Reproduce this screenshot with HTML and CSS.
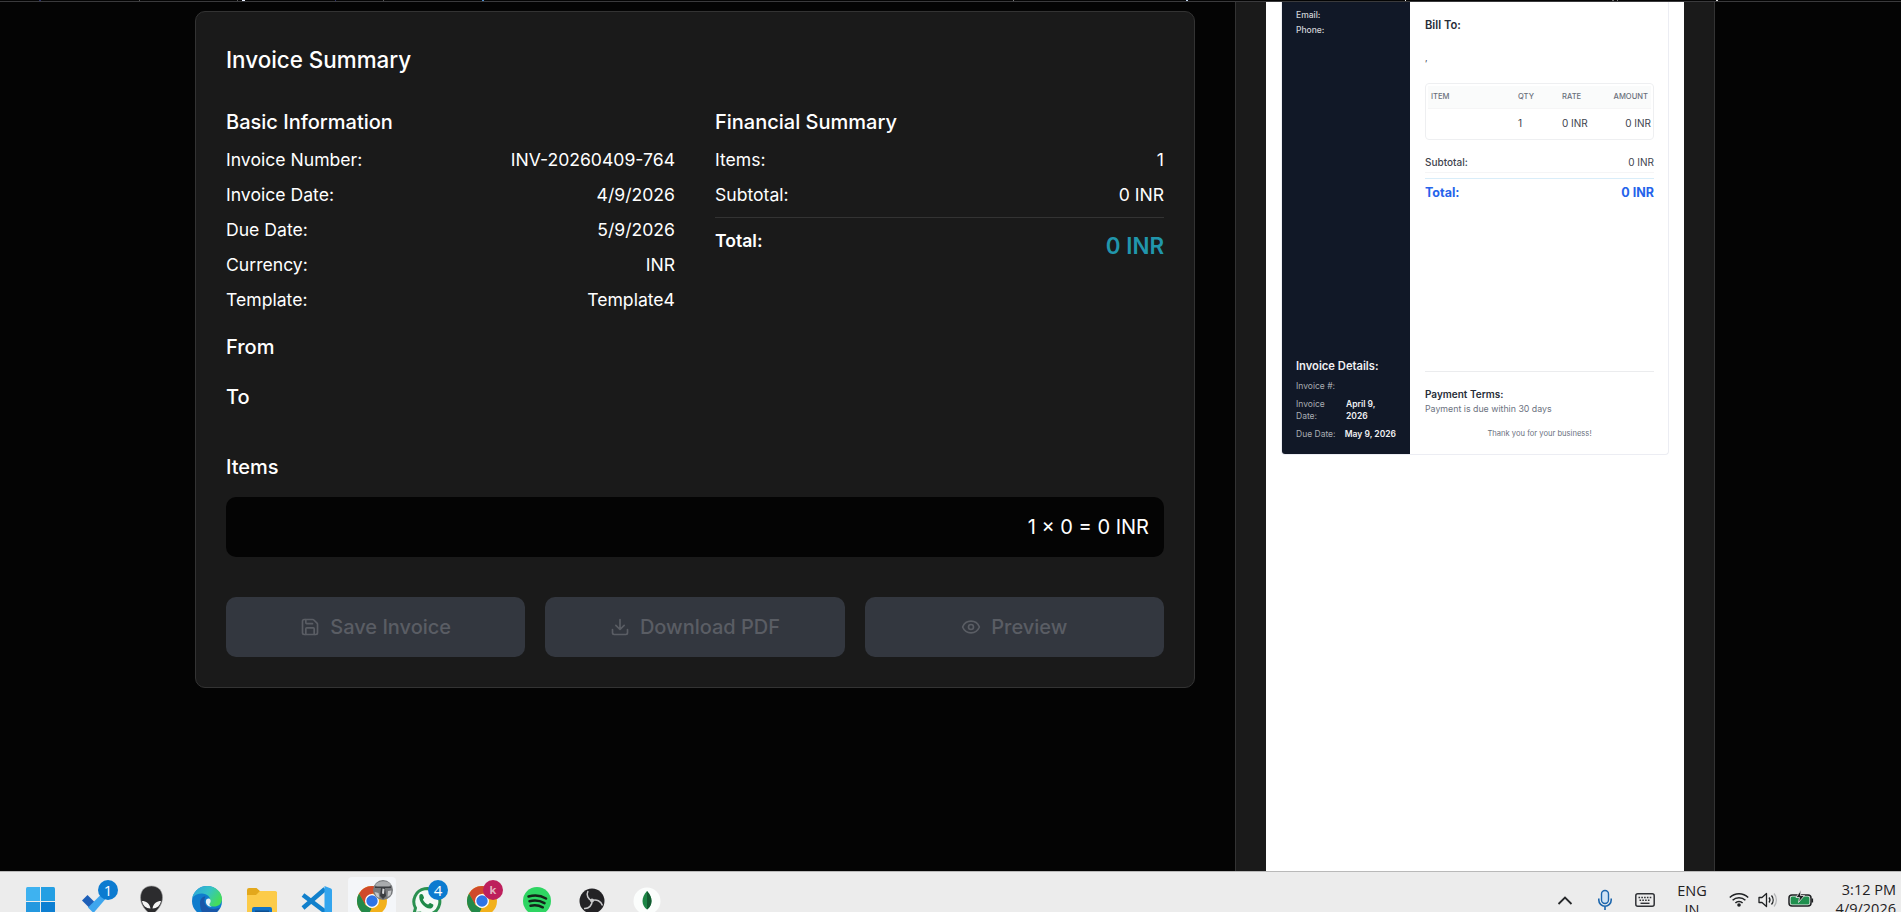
FILE: index.html
```
<!DOCTYPE html>
<html lang="en">
<head>
    <meta charset="UTF-8">
    <meta name="viewport" content="width=device-width, initial-scale=1.0">
    <title>Invoice Generator</title>
    <link rel="stylesheet" href="styles.css">
</head>
<body>
    <div class="top-strip"></div>

    <main class="page">
        <section class="summary">
            <h2>Invoice Summary</h2>

            <div class="summary-columns">
                <div class="summary-col">
                    <h3>Basic Information</h3>
                    <div class="row"><span>Invoice Number:</span><span>INV-20260409-764</span></div>
                    <div class="row"><span>Invoice Date:</span><span>4/9/2026</span></div>
                    <div class="row"><span>Due Date:</span><span>5/9/2026</span></div>
                    <div class="row"><span>Currency:</span><span>INR</span></div>
                    <div class="row"><span>Template:</span><span>Template4</span></div>
                </div>
                <div class="summary-col">
                    <h3>Financial Summary</h3>
                    <div class="row"><span>Items:</span><span>1</span></div>
                    <div class="row"><span>Subtotal:</span><span>0 INR</span></div>
                    <div class="row total"><span>Total:</span><span class="total-amount">0 INR</span></div>
                </div>
            </div>

            <h3 class="party">From</h3>
            <h3 class="party">To</h3>

            <h3 class="items-title">Items</h3>
            <div class="item-row">1 × 0 = 0 INR</div>

            <div class="actions">
                <button class="btn" disabled>
                    <svg width="20" height="20" viewBox="0 0 24 24"><path d="M15.2 3a2 2 0 0 1 1.4.6l3.8 3.8a2 2 0 0 1 .6 1.4V19a2 2 0 0 1-2 2H5a2 2 0 0 1-2-2V5a2 2 0 0 1 2-2z"/><path d="M17 21v-7a1 1 0 0 0-1-1H8a1 1 0 0 0-1 1v7M7 3v4a1 1 0 0 0 1 1h7"/></svg>
                    Save Invoice
                </button>
                <button class="btn" disabled>
                    <svg width="20" height="20" viewBox="0 0 24 24"><path d="M21 15v4a2 2 0 0 1-2 2H5a2 2 0 0 1-2-2v-4"/><path d="M7 10l5 5 5-5M12 15V3"/></svg>
                    Download PDF
                </button>
                <button class="btn" disabled>
                    <svg width="20" height="20" viewBox="0 0 24 24"><path d="M2.06 12.35a1 1 0 0 1 0-.7 10.75 10.75 0 0 1 19.88 0 1 1 0 0 1 0 .7 10.75 10.75 0 0 1-19.88 0"/><circle cx="12" cy="12" r="3"/></svg>
                    Preview
                </button>
            </div>
        </section>

        <aside class="preview-panel">
            <div class="paper">
                <div class="invoice">
                    <div class="invoice-side">
                        <div class="contact">
                            <p>Email:</p>
                            <p>Phone:</p>
                        </div>
                        <div class="details">
                            <h4>Invoice Details:</h4>
                            <div class="detail"><span>Invoice #:</span></div>
                            <div class="detail"><span class="narrow">Invoice Date:</span><b class="narrow-value">April 9, 2026</b></div>
                            <div class="detail"><span>Due Date:</span><b>May 9, 2026</b></div>
                        </div>
                    </div>
                    <div class="invoice-main">
                        <h4 class="bill-to">Bill To:</h4>
                        <p class="address">,</p>
                        <div class="lines">
                            <div class="line line-head"><span>ITEM</span><span>QTY</span><span>RATE</span><span>AMOUNT</span></div>
                            <div class="line"><span></span><span>1</span><span>0 INR</span><span>0 INR</span></div>
                        </div>
                        <div class="subtotal"><b>Subtotal:</b><span>0 INR</span></div>
                        <div class="grand-total"><span>Total:</span><span>0 INR</span></div>
                        <div class="terms">
                            <h4>Payment Terms:</h4>
                            <p>Payment is due within 30 days</p>
                            <p class="thanks">Thank you for your business!</p>
                        </div>
                    </div>
                </div>
            </div>
        </aside>
    </main>

    <footer class="taskbar">
        <div class="apps">
            <!-- Start -->
            <svg class="app" viewBox="0 0 55 41">
                <path fill="#3eb2f0" d="M13 17.500a1.500 1.500 0 0 1 1.500-1.500H27v14H13z"/>
                <path fill="#249fe3" d="M28 16h12.500a1.500 1.500 0 0 1 1.500 1.500V30H28z"/>
                <path fill="#2498df" d="M13 31h14v14H13z"/>
                <path fill="#0d7fd2" d="M28 31h14v14H28z"/>
            </svg>
            <!-- To Do -->
            <svg class="app" viewBox="0 0 55 41">
                <path fill="#1d5fb8" d="M14 29.500l5.500-5.500 8 8-5.500 5.500z"/>
                <path fill="#3ea6ee" d="M20 36.500L39 17.500l4 4L25.500 42z"/>
                <circle cx="40" cy="19" r="10" fill="#0c7bd0"/>
                <text class="badge" x="40" y="24.500">1</text>
            </svg>
            <!-- Alienware -->
            <svg class="app" viewBox="0 0 55 41">
                <path fill="#2c2c2e" stroke="#9a9a9c" stroke-width=".6" d="M28.500 15c7 0 11 5 11 11.500 0 7-5 13.500-11 17.500-6-4-11-10.500-11-17.500C17.500 20 21.500 15 28.500 15z"/>
                <path fill="#f4f4f4" d="M19 30c4 0 7.500 2 8.500 7.500-4.500 0-7.800-3-8.500-7.500zM38 30c-4 0-7.500 2-8.500 7.500 4.500 0 7.800-3 8.500-7.500z"/>
            </svg>
            <!-- Edge -->
            <svg class="app" viewBox="0 0 55 41">
                <defs><linearGradient id="edge" x1="0" y1="0" x2="1" y2=".5"><stop offset="0" stop-color="#2b9fe0"/><stop offset=".55" stop-color="#35c3c4"/><stop offset="1" stop-color="#45dc5c"/></linearGradient></defs>
                <circle cx="29" cy="30" r="15" fill="#0f7ccd"/>
                <path fill="url(#edge)" d="M14.200 27C16 19.500 22 15 29 15c8.500 0 15 6 15 13 0 5-3.800 7.600-8 7.600-3.500 0-5.500-1.200-4-3.600C33.500 26 29 22.500 24 22.500c-4.500 0-8 2-9.800 4.500z"/>
                <path fill="#1b57a8" d="M22 32c0-4 2.500-6.500 5.500-6.500-2 3-1.500 8 2 10.500 4 3 9 2 12.500.5C39 42 35 45 29 45c-4 0-7-6-7-13z"/>
                <path fill="#e8f2f8" d="M28 29.500c.6-2.300 4-2.700 4.600-.2.300 1.500-.4 2.500-.9 3.300-.8 1.400.5 2.600 2 3.100-4 .3-6.500-3-5.700-6.200z"/>
            </svg>
            <!-- File Explorer -->
            <svg class="app" viewBox="0 0 55 41">
                <path fill="#e3a81c" d="M14 19a2 2 0 0 1 2-2h7.500l4 3.500H42a2 2 0 0 1 2 2V34H14z"/>
                <path fill="#fccb49" d="M14 24h9l4-4h15a2 2 0 0 1 2 2v22H14z"/>
                <path fill="#1273c6" d="M19 38a2 2 0 0 1 2-2h16a2 2 0 0 1 2 2v5H19z"/>
                <path fill="#0d4f91" d="M22 39.500h14V43H22z"/>
            </svg>
            <!-- VS Code -->
            <svg class="app" viewBox="0 0 55 41">
                <path fill="none" stroke="#1180cc" stroke-width="4.500" d="M15 24l24 18M15 37l22-19"/>
                <path fill="#33a5ee" d="M36.500 15l6.500 2.500a2 2 0 0 1 1 1.800V44h-7.500z"/>
            </svg>
            <!-- Chrome, active window -->
            <svg class="app" viewBox="0 0 55 41">
                <rect x="5" y="6" width="48" height="48" rx="4" fill="#f4f6f9"/>
                <g id="chrome">
                    <circle cx="29" cy="30" r="15" fill="#f2b11c"/>
                    <path fill="#d04a2b" d="M16 22.500a15 15 0 0 1 26 0H29l-7 11z"/>
                    <path fill="#23894a" d="M16 22.500L22.500 34l6 3.500L25 44.500A15 15 0 0 1 16 22.500z"/>
                    <circle cx="29" cy="30" r="7" fill="#fff"/>
                    <circle cx="29" cy="30" r="5.700" fill="#2f74e6"/>
                </g>
                <circle cx="40" cy="19" r="10" fill="#77797c"/>
                <path fill="#a9abad" d="M32 14c3-4.500 12-5.500 16-.5l-2 2.500H34z"/>
                <path fill="#3b3d40" d="M32 15.500h16v1.500H42l1 8-3 3-3-3 1-8h-6z"/>
                <path fill="#d9dadb" d="M39.500 17.500l2 .5-.5 5-2-.5z"/>
                <path fill="#c4c6c8" d="M31.500 21l4 1 1 5-3-1.500zM45 20l3.500-.5-1 4.500-3 2z"/>
            </svg>
            <!-- WhatsApp -->
            <svg class="app" viewBox="0 0 55 41">
                <path fill="#f4faf6" stroke="#2a9150" stroke-width="3" d="M16 42.500l1.500-5.500a13 13 0 1 1 5 5z"/>
                <path fill="#1f8a49" d="M21.500 24c1-1.500 2.800-1.500 3.500 0l1 2.400c.2.700-.9 1.800-1.100 2.300 1.200 2.300 3 3.800 5.100 4.700.7-.3 1.500-1.700 2.200-1.500l3 1.500c.7 2-1.200 3.900-3.300 4.100-5.500 0-12-7.500-10.400-13.500z"/>
                <circle cx="40" cy="19" r="10" fill="#0c7bd0"/>
                <text class="badge" x="40" y="24.500">4</text>
            </svg>
            <!-- Chrome, second profile -->
            <svg class="app" viewBox="0 0 55 41">
                <use href="#chrome"/>
                <circle cx="40" cy="19" r="10" fill="#bd1f5c"/>
                <text class="badge profile" x="40" y="23">k</text>
            </svg>
            <!-- Spotify -->
            <svg class="app" viewBox="0 0 55 41">
                <circle cx="29" cy="30" r="14" fill="#2ed562"/>
                <path fill="none" stroke="#14241a" stroke-linecap="round" stroke-width="2.500" d="M20.500 25.500c6-1.500 12.500-1 17.500 2M21.500 30.300c5-1.300 10.500-.7 15 1.800M22.500 34.700c4.200-1 8.500-.5 12.300 1.600"/>
            </svg>
            <!-- OBS -->
            <svg class="app" viewBox="0 0 55 41">
                <circle cx="29" cy="30" r="12.500" fill="#232225"/>
                <path fill="none" stroke="#c9c9cb" stroke-width="1.500" d="M25 20c-2 4 0 8.500 4 9.500M29 29.500c4.500-1.500 9 .5 10.500 5M29 29.500c.5 4.500-3 8.500-8 8"/>
                <circle cx="29" cy="29.500" r="2" fill="#c9c9cb"/>
            </svg>
            <!-- MongoDB Compass -->
            <svg class="app" viewBox="0 0 55 41">
                <circle cx="29" cy="30" r="13.500" fill="#fbfdfc"/>
                <path fill="#1c8545" d="M29 20c3 3.500 4.500 6.500 4.500 10 0 4-2 6.500-4.500 8.500-2.500-2-4.500-4.500-4.500-8.500 0-3.500 1.500-6.500 4.500-10z"/>
                <path fill="#125a30" d="M29 20c3 3.500 4.500 6.500 4.500 10 0 4-2 6.500-4.500 8.500z"/>
            </svg>
        </div>

        <div class="tray">
            <svg class="tray-chevron" viewBox="0 0 16 20"><path d="M1.500 14L8 7.500l6.500 6.500" stroke="#26282a" stroke-width="1.800"/></svg>
            <svg class="tray-mic" viewBox="0 0 16 22"><rect x="4.500" y="1.500" width="7" height="13" rx="3.500" fill="#cfe3f5" stroke="#1c66ad" stroke-width="1.400"/><path d="M1.800 9.500v1.500a6.200 6.200 0 0 0 12.400 0V9.500M8 17.500V21" stroke="#1c66ad" stroke-width="1.600"/></svg>
            <svg class="tray-keyboard" viewBox="0 0 20 14"><rect x=".8" y=".8" width="18.400" height="12.400" rx="2" stroke="#303236" stroke-width="1.500"/><path d="M3.500 4.500h13M4.500 7.200h11" stroke="#303236" stroke-width="1.600" stroke-dasharray="1.600 1.200"/><path d="M5.500 10.300h9" stroke="#303236" stroke-width="1.400"/></svg>
            <div class="language">ENG<br>IN</div>
            <svg class="tray-wifi" viewBox="0 0 20 15"><path d="M.8 5.500a13 13 0 0 1 18.400 0M3.600 8.300a9 9 0 0 1 12.800 0M6.400 11a5 5 0 0 1 7.200 0" stroke="#1f2123" stroke-width="1.500"/><circle cx="10" cy="13" r="1.800" fill="#1f2123"/></svg>
            <svg class="tray-volume" viewBox="0 0 20 16"><path d="M1 5.500v5h3l4.500 4V1.500L4 5.500z" stroke="#1f2123" stroke-width="1.300" stroke-linejoin="round"/><path d="M11 5.500a4 4 0 0 1 0 5M13.500 3.500a7 7 0 0 1 0 9" stroke="#1f2123" stroke-width="1.300"/><path d="M16 1.500a10 10 0 0 1 0 13" stroke="#b4b5b7" stroke-width="1.200"/></svg>
            <svg class="tray-battery" viewBox="0 0 26 18"><rect x="1" y="5" width="22" height="11" rx="3" stroke="#1f2123" stroke-width="1.500"/><rect x="2.600" y="6.600" width="18.800" height="7.800" rx="1.500" fill="#1f8f4e"/><path d="M24.300 8.500v4" stroke="#1f2123" stroke-width="1.600"/><path d="M13 0L8 7.500h3.500l-1 5 6-7h-4z" fill="#1f2123" stroke="#ececec" stroke-width=".8"/></svg>
            <div class="clock">3:12 PM<br>4/9/2026</div>
        </div>
    </footer>
</body>
</html>
```
FILE: styles.css
```
* {
    box-sizing: border-box;
}
body {
    margin: 0;
    height: 912px;
    overflow: hidden;
    display: flex;
    flex-direction: column;
    background-color: #040404;
    color: #fff;
    font-family: Inter, "Liberation Sans", sans-serif;
}
h2, h3, h4, p {
    margin: 0;
}
/* Bottom edge of the browser toolbar */
.top-strip {
    height: 2px;
    border-bottom: 1px solid #3a3a3c;
    background:
        linear-gradient(#2a2f6b, #2a2f6b) 39px 0 / 2px 1px no-repeat,
        linear-gradient(#555, #555) 139px 0 / 1px 1px no-repeat,
        linear-gradient(#555, #555) 237px 0 / 1px 1px no-repeat,
        linear-gradient(#e8f0ff, #e8f0ff) 242px 0 / 3px 1px no-repeat,
        linear-gradient(#2a2f6b, #2a2f6b) 335px 0 / 1px 1px no-repeat,
        linear-gradient(#555, #555) 383px 0 / 1px 1px no-repeat,
        linear-gradient(#4d8fd0, #4d8fd0) 482px 0 / 2px 1px no-repeat,
        linear-gradient(#777, #777) 1013px 0 / 1px 1px no-repeat,
        linear-gradient(#c0d4f0, #c0d4f0) 1186px 0 / 2px 1px no-repeat,
        linear-gradient(#eee, #eee) 1405px 0 / 1px 1px no-repeat,
        linear-gradient(#666, #666) 1612px 0 / 2px 1px no-repeat,
        linear-gradient(#777, #777) 1617px 0 / 1px 1px no-repeat,
        linear-gradient(#ddd, #ddd) 1716px 0 / 2px 1px no-repeat;
}
.page {
    height: 869px;
    display: flex;
    align-items: flex-start;
    gap: 40px;
    padding-left: 195px;
    overflow: hidden;
}

/* Summary card */
.summary {
    width: 1000px;
    height: 677px;
    margin-top: 9px;
    padding: 30px;
    background-color: #1a1a1a;
    border: 1px solid #333;
    border-radius: 10px;
}
.summary h2 {
    font-size: 22.4px;
    font-weight: 500;
    line-height: 36px;
    margin-bottom: 29px;
}
.summary h3 {
    font-size: 20px;
    font-weight: 500;
    line-height: 30px;
}
.summary-columns {
    display: grid;
    grid-template-columns: 1fr 1fr;
    gap: 40px;
}
.row {
    display: flex;
    justify-content: space-between;
    height: 27px;
    margin-top: 8px;
    font-size: 17.6px;
    line-height: 27px;
}
.summary h3 + .row {
    margin-top: 9px;
}
.row.total {
    height: 48px;
    margin-top: 9px;
    padding-top: 9px;
    border-top: 1px solid #333;
    font-weight: 600;
}
.total-amount {
    color: #2196ac;
    font-size: 22.4px;
    line-height: 37px;
}
.summary .party {
    margin-top: 20px;
}
.summary-columns + .party {
    margin-top: 19px;
}
.summary .items-title {
    margin: 40px 0 15px;
}
.item-row {
    height: 60px;
    padding: 0 15px;
    background-color: #040404;
    border-radius: 10px;
    font-size: 20px;
    line-height: 60px;
    text-align: right;
}
.actions {
    display: grid;
    grid-template-columns: repeat(3, 1fr);
    gap: 20px;
    margin-top: 40px;
}
.btn {
    display: flex;
    align-items: center;
    justify-content: center;
    gap: 10px;
    height: 60px;
    padding: 0;
    border: none;
    border-radius: 10px;
    background-color: #33373f;
    color: #5a5d64;
    font-family: inherit;
    font-size: 20px;
    font-weight: 500;
}
.btn svg {
    fill: none;
    stroke: currentColor;
    stroke-width: 2;
    stroke-linecap: round;
    stroke-linejoin: round;
}

/* Invoice preview */
.preview-panel {
    width: 480px;
    height: 869px;
    padding: 0 30px;
    background-color: #1a1a1a;
    border: solid #333;
    border-width: 0 1px;
}
.paper {
    height: 869px;
    padding: 0 15px;
    background-color: #fff;
}
.invoice {
    display: flex;
    width: 388px;
    height: 453px;
    border: 1px solid #ecedf3;
    border-top: none;
    border-radius: 0 0 4px 4px;
    overflow: hidden;
}
.invoice-side {
    width: 128px;
    display: flex;
    flex-direction: column;
    justify-content: space-between;
    padding: 6px 14px 14px;
    background-color: #111827;
    color: #d3d5d9;
    font-size: 8.5px;
}
.contact p {
    font-weight: 500;
    line-height: 15px;
}
.details h4 {
    color: #f0f0f2;
    font-size: 11.2px;
    font-weight: 600;
    line-height: 16px;
    margin-bottom: 6px;
}
.detail {
    display: flex;
    justify-content: space-between;
    line-height: 12px;
    margin-bottom: 6px;
    color: #a9acb2;
}
.detail:last-child {
    margin-bottom: 0;
}
.detail b {
    color: #f0f0f2;
    font-weight: 600;
}
.narrow {
    width: 40px;
}
.narrow-value {
    width: 50px;
}
.invoice-main {
    flex: 1;
    display: flex;
    flex-direction: column;
    padding: 15px 14px 13px 15px;
    color: #3d434e;
    font-size: 10px;
}
.bill-to {
    color: #272d38;
    font-size: 11.2px;
    font-weight: 600;
    line-height: 16px;
}
.address {
    margin-top: 18px;
    font-size: 9px;
    line-height: 14px;
}
.lines {
    height: 57px;
    margin-top: 18px;
    padding: 2px;
    border: 1px solid #eeeff1;
    border-radius: 4px;
}
.line {
    display: grid;
    grid-template-columns: 87px 44px 45px 1fr;
    padding-left: 3px;
    line-height: 29px;
}
.line span:last-child {
    text-align: right;
}
.line-head {
    padding-right: 3px;
    background-color: #fafbfb;
    border-bottom: 1px solid #f5f5f6;
    color: #6a707b;
    font-size: 7.6px;
    font-weight: 500;
    line-height: 22px;
}
.subtotal, .grand-total {
    display: flex;
    justify-content: space-between;
}
.subtotal {
    margin-top: 12px;
    line-height: 20px;
    border-bottom: 1px solid #f5f5f6;
}
.subtotal b {
    font-weight: 500;
}
.grand-total {
    margin-top: 5px;
    padding-top: 5px;
    border-top: 1px solid #d9edf9;
    color: #2563eb;
    font-size: 12.5px;
    font-weight: 700;
    line-height: 18px;
}
.terms {
    margin-top: auto;
    padding-top: 15px;
    border-top: 1px solid #ebecee;
}
.terms h4 {
    color: #272d38;
    font-size: 10px;
    font-weight: 600;
    line-height: 15px;
}
.terms p {
    color: #6b7280;
    font-size: 8.8px;
    line-height: 14px;
}
.terms .thanks {
    margin-top: 11px;
    font-size: 7.6px;
    text-align: center;
}

/* Taskbar */
.taskbar {
    display: flex;
    justify-content: space-between;
    height: 41px;
    padding: 0 5px 0 13px;
    overflow: hidden;
    background-color: #ececec;
    border-top: 1px solid #b9b9b9;
    color: #1f2123;
    font-family: "Open Sans", "Noto Sans", sans-serif;
}
.apps {
    display: flex;
    margin-top: -1px;
}
.app {
    width: 55px;
    height: 41px;
}
.badge {
    fill: #fff;
    font-size: 15px;
    font-weight: 500;
    text-anchor: middle;
}
.badge.profile {
    fill: #e3b3bf;
    font-size: 11px;
    font-weight: 700;
}
.tray {
    display: flex;
    align-items: flex-start;
    font-size: 14.5px;
    line-height: 19px;
}
.tray svg {
    fill: none;
}
.tray-chevron {
    width: 16px;
    height: 20px;
    margin: 18px 24px 0 0;
}
.tray-mic {
    width: 16px;
    height: 22px;
    margin: 17px 22px 0 0;
}
.tray-keyboard {
    width: 20px;
    height: 14px;
    margin: 21px 21px 0 0;
}
.language {
    width: 32px;
    margin: 9px 21px 0 0;
    text-align: center;
}
.tray-wifi {
    width: 20px;
    height: 15px;
    margin: 20px 9px 0 0;
}
.tray-volume {
    width: 20px;
    height: 16px;
    margin: 20px 10px 0 0;
}
.tray-battery {
    width: 26px;
    height: 18px;
    margin: 18px 17px 0 0;
}
.clock {
    width: 65px;
    margin-top: 8px;
    text-align: right;
    white-space: nowrap;
}
```
